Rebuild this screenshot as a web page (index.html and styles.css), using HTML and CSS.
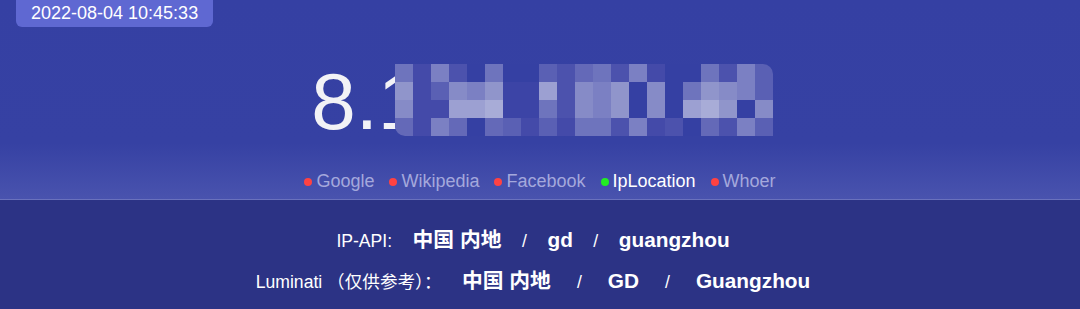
FILE: index.html
```html
<!DOCTYPE html>
<html lang="zh">
<head>
<meta charset="utf-8">
<title>IP</title>
<link rel="stylesheet" href="styles.css">
</head>
<body>
<div class="page">
  <section class="hero">
    <div class="time-badge">2022-08-04 10:45:33</div>
    <div class="ip-row">
      <span class="ip-text">8.1</span>
      <div class="mosaic">
        <i class="s6"></i><i class="s2"></i><i class="s7"></i><i class="s3"></i><i></i><i class="s6"></i><i></i><i></i><i class="s4"></i><i class="s3"></i><i class="s5"></i><i class="s6"></i><i class="s3"></i><i class="s7"></i><i class="s2"></i><i></i><i></i><i class="s6"></i><i class="s3"></i><i class="s7"></i><i class="s4"></i>
        <i class="s9"></i><i class="s2"></i><i class="s4"></i><i class="s8"></i><i class="s7"></i><i class="s9"></i><i class="s1"></i><i class="s1"></i><i class="s10"></i><i class="s3"></i><i class="s8"></i><i class="s7"></i><i class="s9"></i><i></i><i class="s8"></i><i></i><i class="s6"></i><i class="s9"></i><i class="s8"></i><i class="s7"></i><i class="s4"></i>
        <i class="s8"></i><i class="s2"></i><i class="s2"></i><i class="s10"></i><i class="s10"></i><i class="s11"></i><i class="s1"></i><i class="s1"></i><i class="s6"></i><i class="s3"></i><i class="s8"></i><i class="s7"></i><i class="s9"></i><i></i><i class="s8"></i><i></i><i class="s10"></i><i class="s11"></i><i class="s9"></i><i></i><i class="s8"></i>
        <i class="s5"></i><i class="s2"></i><i class="s7"></i><i class="s5"></i><i></i><i class="s5"></i><i class="s4"></i><i class="s2"></i><i class="s4"></i><i class="s2"></i><i class="s6"></i><i class="s6"></i><i class="s3"></i><i class="s7"></i><i class="s2"></i><i class="s3"></i><i></i><i class="s5"></i><i class="s3"></i><i class="s7"></i><i class="s4"></i>
      </div>
    </div>
    <nav class="checks">
      <span class="check"><span class="dot bad"></span>Google</span>
      <span class="check"><span class="dot bad"></span>Wikipedia</span>
      <span class="check"><span class="dot bad"></span>Facebook</span>
      <span class="check ok"><span class="dot good"></span>IpLocation</span>
      <span class="check"><span class="dot bad"></span>Whoer</span>
    </nav>
  </section>
  <section class="info">
    <div class="info-line">
      <span class="label">IP-API:</span>
      <b class="val">中国 内地</b><span class="sep">/</span><b class="val">gd</b><span class="sep">/</span><b class="val">guangzhou</b>
    </div>
    <div class="info-line wide">
      <span class="label">Luminati （仅供参考）：</span>
      <b class="val">中国 内地</b><span class="sep">/</span><b class="val">GD</b><span class="sep">/</span><b class="val">Guangzhou</b>
    </div>
  </section>
</div>
</body>
</html>
```

FILE: styles.css
```css
html, body {
  margin: 0;
  padding: 0;
}
body {
  background: #2c3385;
  font-family: "Liberation Sans", Arial, "Noto Sans CJK SC", sans-serif;
  color: #fff;
  width: 1080px;
  height: 309px;
  overflow: hidden;
}
.page {
  display: flex;
  flex-direction: column;
  height: 309px;
}
.hero {
  height: 199px;
  background: linear-gradient(to bottom, #3540a3 0%, #3641a3 72%, #4953ae 100%);
  border-bottom: 1px solid #6a72bd;
  display: flex;
  flex-direction: column;
  align-items: flex-start;
}
.time-badge {
  margin-left: 16px;
  height: 27px;
  line-height: 27px;
  padding: 0 15px;
  background: #5f68d2;
  border-radius: 0 0 6px 6px;
  font-size: 18px;
  color: #fff;
  white-space: nowrap;
}
.ip-row {
  align-self: stretch;
  display: flex;
  justify-content: center;
  align-items: flex-start;
  margin-top: 35px;
  padding-left: 4px;
  height: 80px;
}
.ip-text {
  font-size: 80px;
  line-height: 80px;
  color: #f2f2f6;
}
.mosaic {
  margin-left: -27.5px;
  margin-top: 2px;
  display: grid;
  grid-template-columns: repeat(21, 18px);
  grid-template-rows: repeat(4, 18px);
  background: #3540a3;
  border-radius: 0 10px 0 10px;
  overflow: hidden;
}
.mosaic i { display: block; }
.s1 { background: #3c44a6; }
.s2 { background: #444aa9; }
.s3 { background: #4c52ad; }
.s4 { background: #5a60b4; }
.s5 { background: #6469b8; }
.s6 { background: #6e74bd; }
.s7 { background: #7b80c3; }
.s8 { background: #868bc7; }
.s9 { background: #9095cb; }
.s10 { background: #9ca0d2; }
.s11 { background: #a8acd7; }
.checks {
  align-self: stretch;
  display: flex;
  justify-content: center;
  gap: 15px;
  margin-top: 29px;
  font-size: 18px;
  line-height: 20px;
  color: #a4a8dc;
}
.check {
  display: flex;
  align-items: center;
}
.check.ok { color: #fff; }
.dot {
  width: 8px;
  height: 8px;
  border-radius: 50%;
  margin-right: 4px;
  margin-top: 1px;
}
.dot.bad { background: #ff4242; }
.dot.good { background: #22ee22; }
.info {
  padding-top: 19px;
  display: flex;
  flex-direction: column;
  align-items: center;
}
.info-line {
  height: 41px;
  line-height: 41px;
  white-space: nowrap;
  padding-right: 14px;
}
.label {
  font-size: 17.6px;
  margin-right: 16px;
}
.val {
  font-size: 20.8px;
  font-weight: bold;
}
.sep {
  font-size: 17.6px;
  margin: 0 20.5px;
}
.info-line.wide .sep {
  margin: 0 26px;
}
```
